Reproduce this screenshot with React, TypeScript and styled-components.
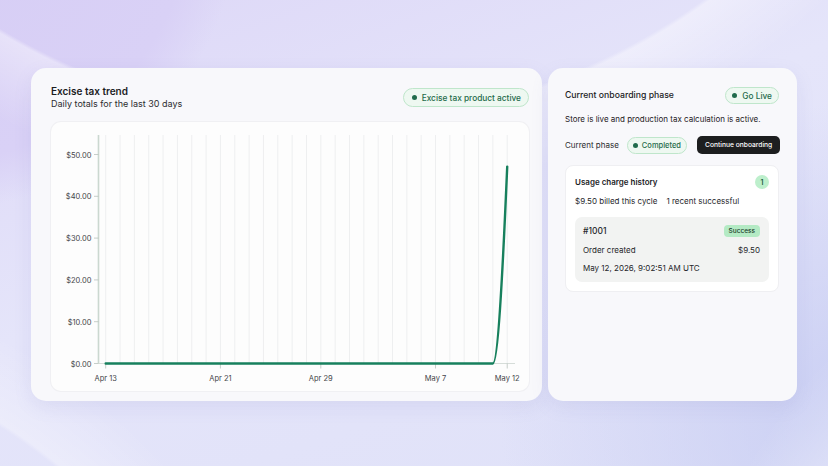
import React from 'react'
import styled, { createGlobalStyle } from 'styled-components'

const GlobalStyle = createGlobalStyle`
  html, body {
    margin: 0;
    padding: 0;
  }
  body {
    font-family: Inter, "Noto Sans", "Liberation Sans", sans-serif;
    color: #1c1d1f;
    -webkit-font-smoothing: antialiased;
  }
`

const GRID_START = 54.7
const GRID_STEP = 14.34
const GRID_COUNT = 29
const AXIS_X = 47.5
const BASE_Y = 241.5
const PX_PER_DOLLAR = 4.18

const yTicks = [50, 40, 30, 20, 10, 0]
const xTicks = [
  { label: 'Apr 13', index: 0 },
  { label: 'Apr 21', index: 8 },
  { label: 'Apr 29', index: 15 },
  { label: 'May 7', index: 23 },
  { label: 'May 12', index: 28 },
]

const gridX = (i: number) => GRID_START + i * GRID_STEP

const Page = styled.div`
  width: 828px;
  height: 466px;
  box-sizing: border-box;
  padding: 68px 31px 65px 31px;
  display: flex;
  gap: 6px;
  background:
    radial-gradient(circle at 330px -520px, rgba(255, 255, 255, 0) 640px, rgba(255, 255, 255, 0.4) 644px, rgba(255, 255, 255, 0) 720px),
    radial-gradient(circle at -60px -90px, #d6cdf5 0, #d9d1f6 250px, rgba(217, 209, 246, 0) 300px),
    radial-gradient(circle at -300px 900px, rgba(255, 255, 255, 0) 560px, rgba(255, 255, 255, 0.3) 564px, rgba(255, 255, 255, 0) 640px),
    radial-gradient(circle at 1200px 720px, rgba(255, 255, 255, 0) 430px, rgba(255, 255, 255, 0.35) 434px, rgba(255, 255, 255, 0) 520px),
    radial-gradient(ellipse 380px 320px at 880px 420px, #c9cef3 0%, rgba(201, 206, 243, 0) 100%),
    linear-gradient(160deg, #ddd7f7 0%, #e5e5fa 45%, #dfe1f8 100%);
`

const Card = styled.section<{ $width: number }>`
  width: ${({ $width }) => $width}px;
  flex: none;
  box-sizing: border-box;
  background: #f8f8fb;
  border-radius: 15px;
  box-shadow: 0 6px 18px rgba(120, 120, 190, 0.12);
  display: flex;
  flex-direction: column;
`

const TrendCard = styled(Card)`
  padding: 17px 13px 10px 20px;
`

const OnboardingCard = styled(Card)`
  padding: 19px 18px 0 17px;
`

const HeaderRow = styled.div`
  display: flex;
  justify-content: space-between;
  align-items: flex-start;
`

const TitleBlock = styled.div`
  display: flex;
  flex-direction: column;
`

const Title = styled.h2`
  margin: 0;
  font-size: 10px;
  line-height: 13px;
  font-weight: 600;
`

const Subtitle = styled.p`
  margin: 0;
  font-size: 9px;
  line-height: 12px;
  color: #2c2d30;
`

type PillSize = 'lg' | 'md' | 'sm'

const pillMetrics: Record<PillSize, { h: number; font: number; pl: number; pr: number; gap: number }> = {
  lg: { h: 19, font: 8.3, pl: 8, pr: 7, gap: 5 },
  md: { h: 17, font: 8.3, pl: 6, pr: 6, gap: 5 },
  sm: { h: 17, font: 7.5, pl: 5, pr: 5, gap: 4 },
}

const Pill = styled.span<{ $size: PillSize; $offset?: number }>`
  flex: none;
  display: inline-flex;
  align-items: center;
  margin-top: ${({ $offset }) => $offset ?? 0}px;
  gap: ${({ $size }) => pillMetrics[$size].gap}px;
  height: ${({ $size }) => pillMetrics[$size].h}px;
  padding: 0 ${({ $size }) => pillMetrics[$size].pr}px 0 ${({ $size }) => pillMetrics[$size].pl}px;
  box-sizing: border-box;
  border-radius: 999px;
  background: #eef8f1;
  border: 1px solid #bfe6cb;
  color: #1f6b4b;
  font-size: ${({ $size }) => pillMetrics[$size].font}px;
  font-weight: 500;
  white-space: nowrap;

  &::before {
    content: '';
    width: 5px;
    height: 5px;
    border-radius: 50%;
    background: #1f6b4b;
  }
`

const ChartPanel = styled.div`
  margin-top: 12px;
  flex: 1;
  background: #fdfdfd;
  box-shadow: 0 0 0 1px #f0f0f3;
  border-radius: 10px;
  overflow: hidden;
`

const AxisText = styled.text`
  font-family: Inter, "Liberation Sans", sans-serif;
  font-size: 7.5px;
  fill: #45464a;
`

const TrendChart = () => {
  const last = gridX(GRID_COUNT - 1)
  const prev = gridX(GRID_COUNT - 2)
  const peakY = BASE_Y - 47.1 * PX_PER_DOLLAR
  return (
    <svg width="477" height="269" viewBox="0 0 477 269">
      {Array.from({ length: GRID_COUNT }, (_, i) => (
        <line key={i} x1={gridX(i)} x2={gridX(i)} y1={13} y2={BASE_Y} stroke="#eeeff0" strokeWidth={1} />
      ))}
      <line x1={AXIS_X} x2={464} y1={BASE_Y} y2={BASE_Y} stroke="#d6ddd9" strokeWidth={1} />
      <line x1={AXIS_X} x2={AXIS_X} y1={13} y2={BASE_Y} stroke="#cbd8d0" strokeWidth={1.6} />
      {yTicks.map((v) => {
        const y = BASE_Y - v * PX_PER_DOLLAR
        return (
          <g key={v}>
            <line x1={43} x2={AXIS_X} y1={y} y2={y} stroke="#b9c2bd" strokeWidth={0.8} />
            <AxisText x={40.5} y={y + 0.5} textAnchor="end" dominantBaseline="central">
              ${v.toFixed(2)}
            </AxisText>
          </g>
        )
      })}
      {xTicks.map((t) => {
        const x = gridX(t.index)
        return (
          <g key={t.label}>
            <line x1={x} x2={x} y1={BASE_Y} y2={BASE_Y + 5} stroke="#b9c2bd" strokeWidth={0.8} />
            <AxisText x={x} y={256} textAnchor="middle" dominantBaseline="central">
              {t.label}
            </AxisText>
          </g>
        )
      })}
      <path
        d={`M${gridX(0)},${BASE_Y} L${prev},${BASE_Y} C${prev + 4.8},${BASE_Y} ${last - 5},${BASE_Y - 80} ${last},${peakY}`}
        fill="none"
        stroke="#17805d"
        strokeWidth={2.4}
        strokeLinecap="round"
        strokeLinejoin="round"
      />
    </svg>
  )
}

const PhaseTitle = styled.h3`
  margin: 0;
  font-size: 8.7px;
  line-height: 17px;
  font-weight: 500;
`

const Description = styled.p`
  margin: 9px 0 0;
  font-size: 8px;
  line-height: 12px;
  color: #1f2023;
`

const PhaseRow = styled.div`
  margin-top: 11px;
  display: flex;
  align-items: center;
`

const Label = styled.span`
  flex: none;
  margin-right: 8px;
  font-size: 8px;
  white-space: nowrap;
  color: #2a2b2e;
`

const DarkButton = styled.button`
  flex: none;
  margin-left: 10px;
  height: 18px;
  padding: 0 8px;
  border: none;
  border-radius: 5px;
  background: #1d1e1f;
  color: #ffffff;
  font-family: inherit;
  font-size: 6.7px;
  font-weight: 500;
  white-space: nowrap;
  cursor: pointer;
`

const HistoryCard = styled.div`
  margin-top: 11px;
  padding: 9px;
  background: #ffffff;
  border: 1px solid #efeff2;
  border-radius: 8px;
  display: flex;
  flex-direction: column;
`

const HistoryHead = styled.div`
  display: flex;
  justify-content: space-between;
  align-items: center;
`

const HistoryTitle = styled.span`
  font-size: 8px;
  font-weight: 600;
`

const CountBadge = styled.span`
  width: 14px;
  height: 14px;
  border-radius: 50%;
  background: #bdefcc;
  color: #1b5e3f;
  font-size: 7px;
  font-weight: 600;
  display: grid;
  place-items: center;
`

const SummaryRow = styled.div`
  margin-top: 6px;
  display: flex;
  gap: 9px;
  font-size: 8px;
  line-height: 12px;
  color: #25262a;
`

const ChargeBox = styled.div`
  margin-top: 10px;
  padding: 8px 9px 8px 8px;
  background: #f2f3f2;
  border-radius: 7px;
  display: flex;
  flex-direction: column;
  gap: 6.5px;
`

const ChargeLine = styled.div<{ $strong?: boolean }>`
  display: flex;
  justify-content: space-between;
  align-items: center;
  height: 12px;
  font-size: ${({ $strong }) => ($strong ? 8.5 : 8)}px;
  font-weight: ${({ $strong }) => ($strong ? 500 : 400)};
  color: #25262a;
`

const StatusTag = styled.span`
  height: 12px;
  padding: 0 5px;
  border-radius: 4px;
  background: #b4eac4;
  color: #1a3a2a;
  font-size: 6.5px;
  font-weight: 500;
  display: inline-flex;
  align-items: center;
`

export default function App() {
  return (
    <>
      <GlobalStyle />
      <Page>
        <TrendCard $width={511}>
          <HeaderRow>
            <TitleBlock>
              <Title>Excise tax trend</Title>
              <Subtitle>Daily totals for the last 30 days</Subtitle>
            </TitleBlock>
            <Pill $size="lg" $offset={3}>
              Excise tax product active
            </Pill>
          </HeaderRow>
          <ChartPanel>
            <TrendChart />
          </ChartPanel>
        </TrendCard>

        <OnboardingCard $width={249}>
          <HeaderRow>
            <PhaseTitle>Current onboarding phase</PhaseTitle>
            <Pill $size="md">Go Live</Pill>
          </HeaderRow>
          <Description>Store is live and production tax calculation is active.</Description>
          <PhaseRow>
            <Label>Current phase</Label>
            <Pill $size="sm">Completed</Pill>
            <DarkButton>Continue onboarding</DarkButton>
          </PhaseRow>
          <HistoryCard>
            <HistoryHead>
              <HistoryTitle>Usage charge history</HistoryTitle>
              <CountBadge>1</CountBadge>
            </HistoryHead>
            <SummaryRow>
              <span>$9.50 billed this cycle</span>
              <span>1 recent successful</span>
            </SummaryRow>
            <ChargeBox>
              <ChargeLine $strong>
                <span>#1001</span>
                <StatusTag>Success</StatusTag>
              </ChargeLine>
              <ChargeLine>
                <span>Order created</span>
                <span>$9.50</span>
              </ChargeLine>
              <ChargeLine>
                <span>May 12, 2026, 9:02:51 AM UTC</span>
              </ChargeLine>
            </ChargeBox>
          </HistoryCard>
        </OnboardingCard>
      </Page>
    </>
  )
}
